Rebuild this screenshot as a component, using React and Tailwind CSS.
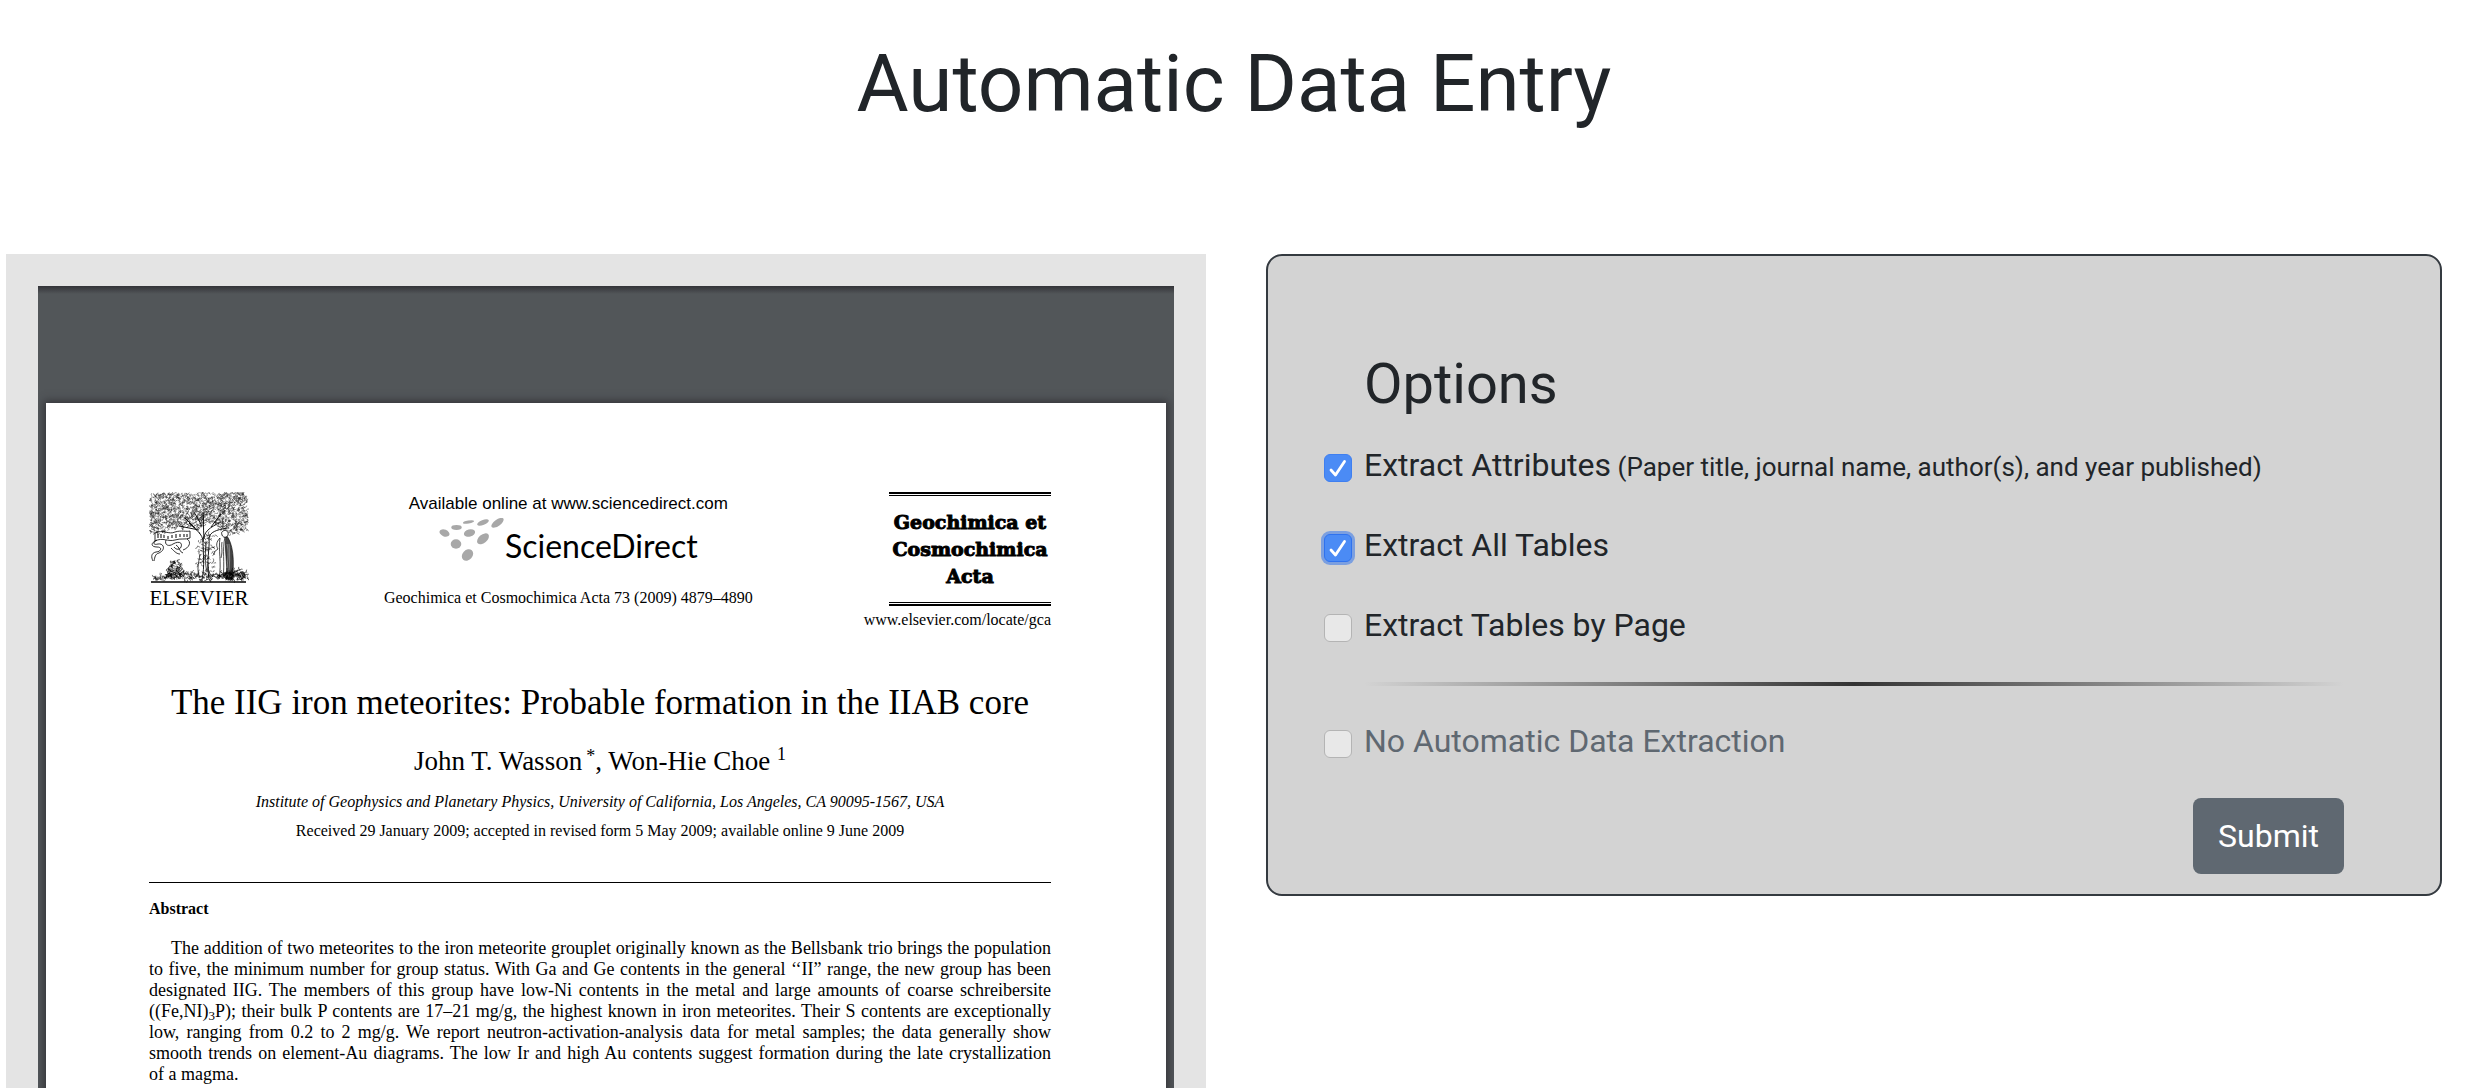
import React from "react";

function makeRandom(seed) {
  let s = seed;
  return () => {
    s = (s * 16807) % 2147483647;
    return s / 2147483647;
  };
}

function scatter(seed, count, inside, box, size) {
  const rnd = makeRandom(seed);
  const [x0, y0, x1, y1] = box;
  let d = "";
  for (let i = 0; i < count; i++) {
    const x = x0 + rnd() * (x1 - x0);
    const y = y0 + rnd() * (y1 - y0);
    const a = rnd() * Math.PI * 2;
    const b = a + 1 + rnd();
    if (!inside(x, y)) continue;
    const dx = Math.cos(a) * size;
    const dy = Math.sin(a) * size;
    const ex = Math.cos(b) * size;
    const ey = Math.sin(b) * size;
    d += `M${x.toFixed(1)} ${y.toFixed(1)}q${dx.toFixed(1)} ${dy.toFixed(1)} ${(dx + ex).toFixed(1)} ${(dy + ey).toFixed(1)}`;
  }
  return d;
}

const canopyEdge = (x) => 39 + 3 * Math.sin(x / 6) - (x > 36 && x < 70 ? 5 : 0);
const leaves = scatter(77, 1900, (x, y) => y < canopyEdge(x) && x + y > 6 && x - y < 93, [1, 1, 98, 44], 1.6);
const bush = scatter(13, 130, (x, y) => Math.abs(x - 26) < (y - 66) * 0.5 + 2, [18, 69, 34, 85], 2);
const groundLeft = scatter(31, 230, (x, y) => y > 85 - Math.min(x, 50 - x / 2) * 0.15, [3, 78, 60, 88], 2);
const groundRight = scatter(53, 260, (x, y) => y > 77 + Math.abs(x - 88) * 0.25, [60, 76, 98, 88], 2);
const vine = scatter(91, 90, () => true, [48, 42, 66, 84], 2);

function ElsevierTree() {
  return (
    <svg viewBox="0 0 100 92" className="h-[92px] w-[100px]" fill="none" stroke="#000" aria-hidden="true">
      <path d={leaves} strokeWidth="0.5" stroke="#222" />
      <path
        d="M53 87C56 74 54 62 54 50 54 42 47 38 40 31M54 50C55 39 60 36 72 30M55 46C54 36 55 28 54 20M60 86C57 70 61 56 60 46 61 40 67 38 78 36M46 36 36 26M62 35 72 22M50 38 30 34M53 34 45 20"
        strokeWidth="0.9"
      />
      <path d="M51 86C47 78 50 70 51 62M57 50C56 64 56 72 58 80M64 85C60 82 59 78 59 72" strokeWidth="0.7" />
      <path d={vine} strokeWidth="0.5" />
      <path
        d="M6 41C14 37 20 43 26 40 32 38 38 40 41 39V46C36 48 32 46 26 48 19 50 14 45 6 49ZM8 48C1 51 2 55 8 55 14 55 12 60 7 60 2 61 2 65 4 69M6 49C4 52 5 53 9 52 15 51 17 58 10 61 6 62 6 65 5 69M17 48C15 53 20 55 24 52 29 49 34 50 32 55 31 58 27 58 25 55M38 47C43 50 40 56 34 58M22 56C26 60 28 62 31 62M27 53C31 55 30 60 34 61"
        strokeWidth="0.8"
      />
      <path d="M9 42v4M12 42v4M15 43v3M19 44v3M23 43v3M27 42v4M31 42v3M35 42v3M38 42v3" strokeWidth="1" />
      <path d="M77 43C84 50 86 70 83 87H77C79 70 75 58 77 43Z" fill="#444" strokeWidth="0.6" />
      <path d="M80 52C81 62 81 74 79 85M78 52C80 60 79 66 78 76" stroke="#ccc" strokeWidth="0.5" />
      <path d="M74 39c3-2 6 1 5 4s-5 3-6 0 0-3 1-4Z" fill="#fff" strokeWidth="0.8" />
      <path d="M71 46C67 50 67 54 69 57L65 60M71 46C69 58 73 70 70 87M76 45C73 58 76 70 74 87M73 50C72 56 74 58 72 66" strokeWidth="0.7" />
      <path d={bush} strokeWidth="0.6" />
      <path d={groundLeft} strokeWidth="0.5" />
      <path d={groundRight} strokeWidth="0.6" />
      <path d="M2 90H97" strokeWidth="1.6" />
    </svg>
  );
}

function ScienceDirectDots() {
  return (
    <svg viewBox="0 0 66 44" className="h-11 w-[66px]" fill="#a8a8a8" aria-hidden="true">
      <ellipse cx="5.5" cy="15" rx="5.2" ry="3.4" transform="rotate(22 5.5 15)" />
      <ellipse cx="17.5" cy="9.5" rx="5.2" ry="2.4" />
      <ellipse cx="29.5" cy="4" rx="5.6" ry="1.5" transform="rotate(-10 29.5 4)" />
      <ellipse cx="44" cy="4.5" rx="6.2" ry="2.5" transform="rotate(-22 44 4.5)" />
      <ellipse cx="58.5" cy="4.8" rx="7.2" ry="3.2" transform="rotate(-36 58.5 4.8)" />
      <ellipse cx="30.5" cy="15" rx="5.7" ry="3.6" transform="rotate(-14 30.5 15)" />
      <ellipse cx="44" cy="20.8" rx="6.9" ry="4.2" transform="rotate(-40 44 20.8)" />
      <ellipse cx="17" cy="26" rx="5.3" ry="4.7" />
      <ellipse cx="28.5" cy="37" rx="6.4" ry="5" transform="rotate(-48 28.5 37)" />
    </svg>
  );
}

const abstractLines = [
  "to five, the minimum number for group status. With Ga and Ge contents in the general ‘‘II” range, the new group has been",
  "designated IIG. The members of this group have low-Ni contents in the metal and large amounts of coarse schreibersite",
  <>((Fe,NI)<sub className="bottom-[-3px] text-[13px]">3</sub>P); their bulk P contents are 17–21 mg/g, the highest known in iron meteorites. Their S contents are exceptionally</>,
  "low, ranging from 0.2 to 2 mg/g. We report neutron-activation-analysis data for metal samples; the data generally show",
  "smooth trends on element-Au diagrams. The low Ir and high Au contents suggest formation during the late crystallization",
];

function PaperPage() {
  return (
    <article className="mx-2 mt-[117px] min-h-[1450px] bg-white pt-[89px] pr-[115px] pl-[103px] font-['Liberation_Serif',serif] text-black shadow-[0_0_8px_2px_#333338]">
      <header className="flex items-start">
        <div className="flex flex-col items-center">
          <ElsevierTree />
          <span className="mt-0.5 text-[21px] leading-6">ELSEVIER</span>
        </div>
        <div className="flex flex-1 flex-col items-center pt-0.5 pl-6">
          <p className="font-['Liberation_Sans',sans-serif] text-[17px] leading-5">Available online at www.sciencedirect.com</p>
          <div className="mt-1 flex h-12 items-end">
            <div className="self-start">
              <ScienceDirectDots />
            </div>
            <span className="font-[Lato,sans-serif] text-[32px] leading-10">ScienceDirect</span>
          </div>
          <p className="mt-[22px] text-[16px] leading-5">Geochimica et Cosmochimica Acta 73 (2009) 4879–4890</p>
        </div>
        <div className="flex flex-col items-end">
          <div className="w-[162px]">
            <div className="h-1 border-t-2 border-b border-black" />
            <p className="pt-[13px] pb-3 text-center font-['DejaVu_Serif',serif] text-[19px] leading-[27px] font-bold whitespace-nowrap [-webkit-text-stroke:1px_#000]">
              Geochimica et
              <br />
              Cosmochimica
              <br />
              Acta
            </p>
            <div className="h-1 border-t border-b-2 border-black" />
          </div>
          <a href="#locate" className="mt-1 text-[16px] leading-5">www.elsevier.com/locate/gca</a>
        </div>
      </header>

      <h2 className="mt-[53px] text-center text-[35px] leading-10 whitespace-nowrap">
        The IIG iron meteorites: Probable formation in the IIAB core
      </h2>
      <p className="mt-[22px] text-center text-[27px] leading-8">
        John T. Wasson<sup className="top-[-8px] pl-1 text-[18px]">*</sup>, Won-Hie Choe <sup className="top-[-10px] text-[18px]">1</sup>
      </p>
      <p className="mt-[15px] text-center text-[16px] leading-5 italic">
        Institute of Geophysics and Planetary Physics, University of California, Los Angeles, CA 90095-1567, USA
      </p>
      <p className="mt-[9px] text-center text-[16px] leading-5">
        Received 29 January 2009; accepted in revised form 5 May 2009; available online 9 June 2009
      </p>
      <hr className="mt-[41px] border-t border-black" />
      <h3 className="mt-4 text-[16px] leading-5 font-bold">Abstract</h3>
      <div className="mt-[19px] text-[18px] leading-[21px]">
        <p className="pl-[22px] [text-align-last:justify]">
          The addition of two meteorites to the iron meteorite grouplet originally known as the Bellsbank trio brings the population
        </p>
        {abstractLines.map((line, i) => (
          <p key={i} className="[text-align-last:justify]">{line}</p>
        ))}
        <p>of a magma.</p>
      </div>
    </article>
  );
}

function Option({ id, label, hint, checked, focused, muted }) {
  return (
    <div className="flex items-start gap-3">
      <span className="mt-[13px] grid size-7 shrink-0">
        <input
          id={id}
          type="checkbox"
          defaultChecked={checked}
          autoFocus={focused}
          className="peer col-start-1 row-start-1 size-7 appearance-none rounded-md border border-[#b4b4b4] bg-[#e8e8e8] outline-none checked:border-[#3f7ff0] checked:bg-[#4b8bf5] focus:border-[#2f72ee] focus:ring-3 focus:ring-[#7b9fe0]"
        />
        <svg
          viewBox="0 0 28 28"
          className="pointer-events-none invisible col-start-1 row-start-1 size-7 peer-checked:visible"
          fill="none"
          stroke="#fff"
          strokeWidth="2.8"
          strokeLinecap="round"
          strokeLinejoin="round"
          aria-hidden="true"
        >
          <path d="M7 16 11.5 21 20.500 7.500" />
        </svg>
      </span>
      <label htmlFor={id} className={muted ? "text-[32px] leading-[48px] text-[#5f6871]" : "text-[32px] leading-[48px]"}>
        {label}
        {hint && <small className="text-[26px] leading-none"> {hint}</small>}
      </label>
    </div>
  );
}

export default function App() {
  return (
    <div className="flex h-screen flex-col overflow-hidden bg-white font-[Roboto,sans-serif] text-[#212529]">
      <h1 className="pt-9 text-center text-[80px] leading-[96px]">Automatic Data Entry</h1>
      <main className="mt-[122px] grid min-h-0 flex-1 grid-cols-[1200fr_1176fr] gap-[60px] pr-[26px] pl-1.5">
        <section aria-label="Document" className="overflow-hidden bg-[#e4e4e4] px-8 pt-8">
          <div className="relative h-full overflow-hidden bg-[#525659]">
            <PaperPage />
            <div className="absolute inset-x-0 top-0 h-2 bg-linear-to-b from-[#333338] to-transparent" />
          </div>
        </section>
        <form
          onSubmit={(e) => e.preventDefault()}
          className="self-start rounded-2xl border-2 border-[#343a40] bg-[#d3d3d3] pt-[95px] pr-24 pb-5 pl-14"
        >
          <h2 className="pl-10 text-[56px] leading-[67px]">Options</h2>
          <div className="mt-[23px] flex flex-col gap-8">
            <Option id="attributes" label="Extract Attributes" hint="(Paper title, journal name, author(s), and year published)" checked />
            <Option id="all-tables" label="Extract All Tables" checked focused />
            <Option id="by-page" label="Extract Tables by Page" />
          </div>
          <hr className="mt-[33px] ml-10 h-1 border-0 bg-linear-to-r from-transparent via-[#333333] to-transparent" />
          <div className="mt-[31px]">
            <Option id="none" label="No Automatic Data Extraction" muted />
          </div>
          <div className="mt-[33px] flex justify-end">
            <button type="submit" className="h-[76px] rounded-lg bg-[#5f6871] px-[25px] text-[32px] leading-[48px] text-white">
              Submit
            </button>
          </div>
        </form>
      </main>
    </div>
  );
}
